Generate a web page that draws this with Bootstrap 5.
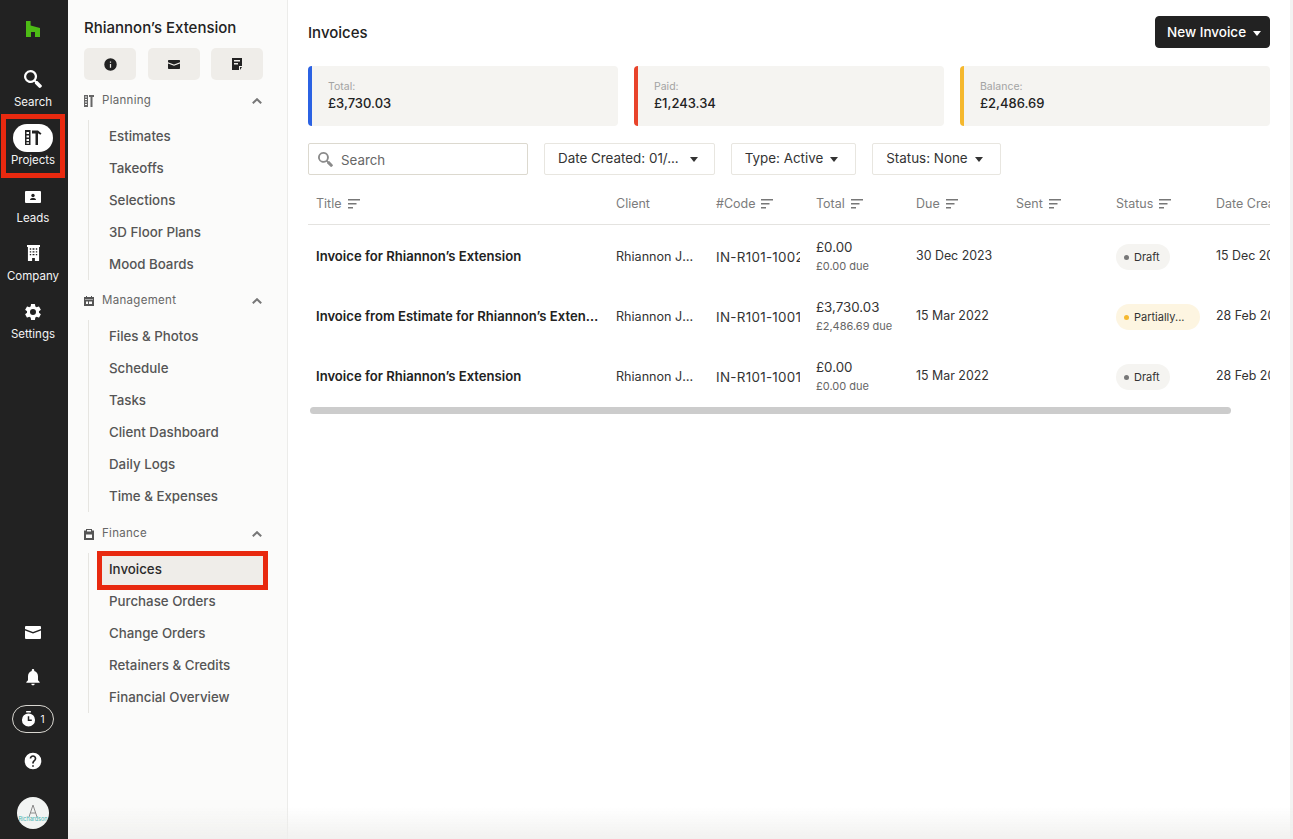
<!DOCTYPE html>
<html lang="en">
<head>
  <meta charset="UTF-8" />
  <meta name="viewport" content="width=device-width, initial-scale=1" />
  <title>Invoices</title>
  <link href="https://cdn.jsdelivr.net/npm/bootstrap@5.3.3/dist/css/bootstrap.min.css" rel="stylesheet" />
  <style>
    html, body { height: 100%; }
    body { font-family: "Inter", "Liberation Sans", sans-serif; font-size: 13.3px; color: #2b2b2b; background: #fff; overflow: hidden; }
    .app-shell { height: 839px; }

    .rail { width: 68px; background: #222; color: #fff; flex-shrink: 0; padding-right: 2px; }
    .rail-logo { height: 57px; }
    .rail-item { height: 58px; font-size: 11.5px; color: #f4f4f4; position: relative; }
    .rail-item svg { fill: #fff; }
    .rail-gap { margin-top: 7px; }
    .rail-pill { width: 40px; height: 28px; border-radius: 14px; background: #fff; }
    .rail-foot { height: 42px; }
    .rail-foot-first { height: 47px; }
    .rail-timer { width: 42px; height: 28px; border: 1px solid #d8d6d0; border-radius: 14px; font-size: 10px; }
    .rail-avatar-wrap { padding: 15px 0 10px; }
    .rail-avatar { width: 32px; height: 32px; border-radius: 50%; background: #f2f4f3; font-size: 5.5px; color: #45b3b0; line-height: 1; overflow: hidden; white-space: nowrap; }
    .mark-box { position: absolute; border: 5px solid #e8290f; pointer-events: none; }
    .mark-projects { left: 1px; right: 1px; top: -1px; bottom: -5px; }
    .mark-invoices { left: -5px; right: -5px; top: -2px; bottom: -5px; }

    .side-panel { width: 220px; background: #fbfbfa; border-right: 1px solid #ececea; padding: 0 24px 0 16px; flex-shrink: 0; }
    .side-title { font-size: 15px; font-weight: 500; color: #222; height: 48px; padding-top: 18px; line-height: 20px; }
    .side-btn { width: 52px; height: 32px; background: #efede9; border: 0; border-radius: 5px; padding: 0; }
    .side-head { height: 40px; padding: 2px 1px 0 0; font-size: 11.5px; color: #666; letter-spacing: .3px; }
    .side-head-last { margin-top: 1px; }
    .side-list { margin-left: 4px; border-left: 1px solid #e6e5e1; padding-left: 13px; }
    .side-link { height: 32px; padding: 2px 0 0 7px; font-size: 13.3px; font-weight: 500; color: #555; position: relative; text-decoration: none; }
    .side-link.is-current { background: #efede9; color: #2b2b2b; }

    .main-pane { min-width: 0; padding: 0 20px; border-right: 3px solid #f3f3f2; }
    .page-top { height: 66px; padding-top: 16px; }
    .page-heading { font-size: 15px; font-weight: 500; color: #222; margin: 0; }
    .btn-invoice { width: 115px; height: 32px; padding: 0 0 0 11px; font-size: 13.5px; font-weight: 500; background: #222; border-color: #222; border-radius: 4px; text-align: left; }
    .sum-box { height: 60px; background: #f5f4f1; border-radius: 4px; border-left: 4px solid; padding-left: 16px; }
    .sum-label { font-size: 10.5px; color: #a3a3a3; line-height: 14px; }
    .sum-value { font-size: 13px; font-weight: 500; color: #222; line-height: 18px; }
    .filter-row { margin-top: 17px; }
    .search-box { width: 220px; height: 32px; border: 1px solid #dcd9cf; border-radius: 2px; padding: 3px 0 0 9px; }
    .search-box svg { margin-top: -3px; }
    .search-box input { border: 0; outline: 0; padding: 0; width: 160px; font-size: 13.3px; background: transparent; }
    .search-box input::placeholder { color: #666; opacity: 1; }
    .btn-filter { height: 32px; padding: 0 17px 2px 13px; font-size: 13.4px; color: #333; background: #fff; border: 1px solid #e8e6e0; border-radius: 2px; }
    .btn-filter.dropdown-toggle::after, .btn-invoice.dropdown-toggle::after { margin-left: 7px; vertical-align: 1px; border-top-width: 5px; border-left-width: 4.5px; border-right-width: 4.5px; }
    .btn-filter.filter-date.dropdown-toggle::after { margin-left: 11px; }
    .btn-filter.filter-date { padding-right: 16px; }
    .table-clip { overflow: hidden; margin-top: 10px; }
    .inv-table { table-layout: fixed; width: 1062px; margin: 0; }
    .inv-table th { height: 39px; font-size: 12.5px; font-weight: 400; color: #7c7c7c; padding: 0 8px; border-bottom: 1px solid #e4e3e0; vertical-align: middle; white-space: nowrap; }
    .inv-table td { height: 60px; font-size: 12.4px; color: #333; padding: 4px 8px 0; border: 0; vertical-align: middle; white-space: nowrap; overflow: hidden; }
    .inv-table td.inv-title { font-size: 13.1px; font-weight: 600; color: #222; text-overflow: ellipsis; padding-top: 5px; }
    .inv-table td.inv-client { text-overflow: ellipsis; font-size: 12.6px; padding-top: 6px; }
    .inv-table td.inv-code { padding-top: 6px; }
    .code-clip { overflow: hidden; font-size: 13.4px; letter-spacing: .3px; }
    .inv-total { font-size: 13.3px; line-height: 20px; }
    .inv-due { font-size: 11px; color: #666; line-height: 18px; }
    .sort-mark { margin-left: 6px; vertical-align: -1px; }
    .status-pill { height: 26px; padding: 0 10px 0 8px; font-size: 11px; font-weight: 400; color: #333; border-radius: 13px; background: #f5f4f1; margin-top: 2px; }
    .status-pill.is-partial { background: #fdf5e1; width: 84px; }
    .status-dot { width: 5px; height: 5px; border-radius: 50%; background: #777; margin-right: 5px; }
    .is-partial .status-dot { background: #f5b82e; }
    .fake-scroll { width: 921px; height: 7px; background: #ccc; border-radius: 4px; margin: 3px 0 0 2px; }
    .bottom-fade { position: fixed; left: 68px; right: 0; bottom: 0; height: 32px; background: linear-gradient(rgba(238,238,236,0), rgba(238,238,236,.8)); pointer-events: none; }
  </style>
</head>
<body>
  <div class="app-shell d-flex">

    <nav class="rail d-flex flex-column align-items-center">
      <div class="rail-logo d-flex align-items-center justify-content-center w-100">
        <svg width="14" height="16" viewBox="0 0 14 16"><path fill="#4dbc15" d="M0 0h4.600v4.500L14 7v9H9v-5H5v5H0z"/></svg>
      </div>
      <div class="rail-item d-flex flex-column align-items-center justify-content-end w-100 pb-1">
        <svg width="18" height="18" viewBox="0 0 18 18"><path fill-rule="evenodd" d="M6.500 0a6.500 6.500 0 0 1 5.200 10.400l.7.700 1-.2 4 4a1.400 1.400 0 0 1 0 2l-.6.600a1.400 1.400 0 0 1-2 0l-4-4 .2-1-.7-.7A6.500 6.500 0 1 1 6.500 0zm0 2.200a4.300 4.300 0 1 0 0 8.600 4.300 4.300 0 0 0 0-8.600z"/></svg>
        <span style="margin-top:6px">Search</span>
      </div>
      <div class="rail-item d-flex flex-column align-items-center justify-content-end w-100 pb-1">
        <span class="rail-pill d-flex align-items-center justify-content-center">
          <svg width="17" height="15" viewBox="0 0 17 15"><path fill="#222" fill-rule="evenodd" d="M0 0h5.500v15H0zm1.500 2v2h2.500V2zm0 3.500v2h2.500v-2zm0 3.500v2h2.500V9zm0 3.200v1.600h2.500v-1.600zM7 .5h6l3.500 3-1.200 1.300L13.500 3.500h-.5V15h-2.500V3.500H7z"/></svg>
        </span>
        <span>Projects</span>
        <span class="mark-box mark-projects"></span>
      </div>
      <div class="rail-item d-flex flex-column align-items-center justify-content-end w-100 pb-1">
        <svg width="16" height="12" viewBox="0 0 16 12"><path d="M1 0h14a1 1 0 0 1 1 1v10a1 1 0 0 1-1 1H1a1 1 0 0 1-1-1V1a1 1 0 0 1 1-1z"/><circle cx="8" cy="4.500" r="1.700" fill="#222"/><path fill="#222" d="M5 9c0-1.500 1.500-2 3-2s3 .5 3 2z"/></svg>
        <span class="rail-gap">Leads</span>
      </div>
      <div class="rail-item d-flex flex-column align-items-center justify-content-end w-100 pb-1">
        <svg width="13" height="16" viewBox="0 0 14 17"><path d="M0 0h14v2h-1v15H8.500v-3h-3v3H1V2H0z"/><path fill="#222" d="M3 3.500h1.500V5H3zm3 0h2V5H6zm3.500 0H11V5H9.500zM3 6.500h1.500V8H3zm3 0h2V8H6zm3.500 0H11V8H9.500zM3 9.500h1.500V11H3zm3 0h2V11H6zm3.500 0H11V11H9.500z"/></svg>
        <span class="rail-gap">Company</span>
      </div>
      <div class="rail-item d-flex flex-column align-items-center justify-content-end w-100 pb-1">
        <svg width="20" height="20" viewBox="0 0 24 24"><path d="M19.140 12.940c.04-.3.06-.61.06-.94 0-.32-.02-.64-.07-.94l2.030-1.580a.49.49 0 0 0 .12-.61l-1.920-3.320a.488.488 0 0 0-.59-.22l-2.390.96c-.5-.38-1.030-.7-1.620-.94l-.36-2.540a.484.484 0 0 0-.48-.41h-3.840c-.24 0-.43.17-.47.41l-.36 2.540c-.59.24-1.130.57-1.620.94l-2.390-.96c-.22-.08-.47 0-.59.22L2.740 8.870c-.12.21-.08.47.12.61l2.030 1.580c-.05.3-.09.63-.09.94s.02.64.07.94l-2.030 1.580a.49.49 0 0 0-.12.61l1.920 3.320c.12.22.37.29.59.22l2.390-.96c.5.38 1.030.7 1.620.94l.36 2.540c.05.24.24.41.48.41h3.840c.24 0 .44-.17.47-.41l.36-2.540c.59-.24 1.130-.56 1.620-.94l2.390.96c.22.08.47 0 .59-.22l1.920-3.320c.12-.22.07-.47-.12-.61l-2.010-1.580zM12 15.600A3.610 3.610 0 0 1 8.400 12 3.610 3.610 0 0 1 12 8.400a3.610 3.610 0 0 1 3.600 3.600 3.610 3.610 0 0 1-3.600 3.600z"/></svg>
        <span class="mt-1">Settings</span>
      </div>

      <div class="mt-auto d-flex flex-column align-items-center w-100">
        <div class="rail-foot-first d-flex align-items-center justify-content-center w-100">
          <svg width="16" height="13" viewBox="0 0 16 13"><path fill="#fff" d="M1 0h14a1 1 0 0 1 1 1v2L8 6 0 3V1a1 1 0 0 1 1-1zM0 4.500l8 3 8-3V12a1 1 0 0 1-1 1H1a1 1 0 0 1-1-1z"/></svg>
        </div>
        <div class="rail-foot d-flex align-items-center justify-content-center w-100">
          <svg width="20" height="20" viewBox="0 0 24 24"><path fill="#fff" d="M12 22c1.100 0 2-.9 2-2h-4c0 1.100.9 2 2 2zm6-6v-5c0-3.070-1.630-5.640-4.500-6.320V4c0-.83-.67-1.500-1.500-1.500s-1.500.67-1.500 1.500v.68C7.640 5.360 6 7.920 6 11v5l-2 2v1h16v-1l-2-2z"/></svg>
        </div>
        <div class="rail-foot d-flex align-items-center justify-content-center w-100">
          <div class="rail-timer d-flex align-items-center justify-content-center gap-1">
            <svg width="15" height="16" viewBox="0 0 16 17"><path fill="#fff" d="M5.500 0h5v1.500h-5zM8 2.500a7 7 0 1 1 0 14 7 7 0 0 1 0-14z"/><path fill="none" stroke="#222" stroke-width="1.600" d="M8 5.500v4.200h3.500"/></svg>
            <span>1</span>
          </div>
        </div>
        <div class="rail-foot d-flex align-items-center justify-content-center w-100">
          <svg width="20" height="20" viewBox="0 0 24 24"><path fill="#fff" d="M12 2a10 10 0 1 0 0 20 10 10 0 0 0 0-20zm1 17h-2v-2h2v2zm2.070-7.750l-.9.920C13.450 12.900 13 13.500 13 15h-2v-.5c0-1.100.45-2.100 1.170-2.830l1.240-1.260c.37-.36.59-.86.59-1.410 0-1.100-.9-2-2-2s-2 .9-2 2H8c0-2.210 1.790-4 4-4s4 1.790 4 4c0 .88-.36 1.680-.93 2.250z"/></svg>
        </div>
        <div class="rail-avatar-wrap d-flex justify-content-center">
          <div class="rail-avatar d-flex flex-column align-items-center justify-content-center">
            <svg width="10" height="13" viewBox="0 0 10 13"><path fill="none" stroke="#8a8a8a" stroke-width="1" d="M1 13 5 1l4 12M2.500 9h5"/></svg>
            <span>Richardson</span>
          </div>
        </div>
      </div>
    </nav>

    <aside class="side-panel">
      <div class="side-title">Rhiannon’s Extension</div>
      <div class="d-flex justify-content-between">
        <button class="side-btn d-flex align-items-center justify-content-center" type="button" aria-label="Info">
          <svg width="15" height="15" viewBox="0 0 24 24"><path fill="#222" d="M12 2a10 10 0 1 0 0 20 10 10 0 0 0 0-20zm1 15h-2v-6h2v6zm0-8h-2V7h2v2z"/></svg>
        </button>
        <button class="side-btn d-flex align-items-center justify-content-center" type="button" aria-label="Mail">
          <svg width="12" height="9" viewBox="0 0 16 12"><path fill="#222" d="M1 0h14a1 1 0 0 1 1 1v2L8 6 0 3V1a1 1 0 0 1 1-1zM0 4.500l8 3 8-3V11a1 1 0 0 1-1 1H1a1 1 0 0 1-1-1z"/></svg>
        </button>
        <button class="side-btn d-flex align-items-center justify-content-center" type="button" aria-label="Notes">
          <svg width="10" height="12" viewBox="0 0 10 12"><path fill="#222" fill-rule="evenodd" d="M0 0h10v8H7v4H0zm2 2v1.500h6V2zm0 3v1.500h4V5zM8 9h2l-2 3z"/></svg>
        </button>
      </div>

      <div class="side-head d-flex align-items-center">
        <svg class="me-2" width="10" height="12" viewBox="0 0 10 12"><path fill="#666" fill-rule="evenodd" d="M0 0h4v12H0zm1 1.500v1h2v-1zm0 2.500v1h2V4zm0 2.500v1h2v-1zm0 2.500v1h2V9zM5 0h5v2H8.500v10H6.500V2H5z"/></svg>
        <span>Planning</span>
        <svg class="ms-auto" width="10" height="6" viewBox="0 0 10 6"><path fill="none" stroke="#777" stroke-width="2" d="M.8 5.300 5 1.200l4.200 4.100"/></svg>
      </div>
      <div class="side-list">
        <a class="side-link d-flex align-items-center" href="#">Estimates</a>
        <a class="side-link d-flex align-items-center" href="#">Takeoffs</a>
        <a class="side-link d-flex align-items-center" href="#">Selections</a>
        <a class="side-link d-flex align-items-center" href="#">3D Floor Plans</a>
        <a class="side-link d-flex align-items-center" href="#">Mood Boards</a>
      </div>

      <div class="side-head d-flex align-items-center">
        <svg class="me-2" width="10" height="10" viewBox="0 0 10 10"><path fill="#555" fill-rule="evenodd" d="M0 1h2V0h1v1h4V0h1v1h2v9H0zm1 2.500V4h8v-.5zM2 5.500V8h2V5.500zm3 0V8h3V5.500z"/></svg>
        <span>Management</span>
        <svg class="ms-auto" width="10" height="6" viewBox="0 0 10 6"><path fill="none" stroke="#777" stroke-width="2" d="M.8 5.300 5 1.200l4.200 4.100"/></svg>
      </div>
      <div class="side-list">
        <a class="side-link d-flex align-items-center" href="#">Files &amp; Photos</a>
        <a class="side-link d-flex align-items-center" href="#">Schedule</a>
        <a class="side-link d-flex align-items-center" href="#">Tasks</a>
        <a class="side-link d-flex align-items-center" href="#">Client Dashboard</a>
        <a class="side-link d-flex align-items-center" href="#">Daily Logs</a>
        <a class="side-link d-flex align-items-center" href="#">Time &amp; Expenses</a>
      </div>

      <div class="side-head side-head-last d-flex align-items-center">
        <svg class="me-2" width="10" height="11" viewBox="0 0 10 11"><path fill="#555" fill-rule="evenodd" d="M2 0h6v1.500h2V11H0V1.500h2zm1 1v1.500h4V1zM2 5.500V9h6V5.500z"/></svg>
        <span>Finance</span>
        <svg class="ms-auto" width="10" height="6" viewBox="0 0 10 6"><path fill="none" stroke="#777" stroke-width="2" d="M.8 5.300 5 1.200l4.200 4.100"/></svg>
      </div>
      <div class="side-list">
        <a class="side-link is-current d-flex align-items-center" href="#">Invoices<span class="mark-box mark-invoices"></span></a>
        <a class="side-link d-flex align-items-center" href="#">Purchase Orders</a>
        <a class="side-link d-flex align-items-center" href="#">Change Orders</a>
        <a class="side-link d-flex align-items-center" href="#">Retainers &amp; Credits</a>
        <a class="side-link d-flex align-items-center" href="#">Financial Overview</a>
      </div>
    </aside>

    <main class="main-pane flex-grow-1">
      <div class="page-top d-flex justify-content-between align-items-start">
        <h1 class="page-heading mt-2">Invoices</h1>
        <button class="btn btn-dark btn-invoice dropdown-toggle" type="button">New Invoice</button>
      </div>

      <div class="row g-3">
        <div class="col-4"><div class="sum-box d-flex flex-column justify-content-center" style="border-left-color:#2b62e3"><div class="sum-label">Total:</div><div class="sum-value">£3,730.03</div></div></div>
        <div class="col-4"><div class="sum-box d-flex flex-column justify-content-center" style="border-left-color:#e8432a"><div class="sum-label">Paid:</div><div class="sum-value">£1,243.34</div></div></div>
        <div class="col-4"><div class="sum-box d-flex flex-column justify-content-center" style="border-left-color:#f5b82e"><div class="sum-label">Balance:</div><div class="sum-value">£2,486.69</div></div></div>
      </div>

      <div class="filter-row d-flex gap-3">
        <div class="search-box d-flex align-items-center gap-2">
          <svg width="15" height="15" viewBox="0 0 18 18"><path fill="#8a8a8a" fill-rule="evenodd" d="M6.500 0a6.500 6.500 0 0 1 5.200 10.400l.7.700 1-.2 4 4a1.400 1.400 0 0 1 0 2l-.6.600a1.400 1.400 0 0 1-2 0l-4-4 .2-1-.7-.7A6.500 6.500 0 1 1 6.500 0zm0 2.200a4.300 4.300 0 1 0 0 8.600 4.300 4.300 0 0 0 0-8.600z"/></svg>
          <input type="text" placeholder="Search" />
        </div>
        <button class="btn btn-filter filter-date dropdown-toggle" type="button">Date Created: 01/...</button>
        <button class="btn btn-filter dropdown-toggle" type="button">Type: Active</button>
        <button class="btn btn-filter dropdown-toggle" type="button">Status: None</button>
      </div>

      <div class="table-clip">
        <table class="table inv-table">
          <colgroup><col style="width:300px"><col style="width:100px"><col style="width:100px"><col style="width:100px"><col style="width:100px"><col style="width:100px"><col style="width:100px"><col style="width:162px"></colgroup>
          <thead>
            <tr>
              <th>Title<svg class="sort-mark" width="12" height="10" viewBox="0 0 12 10"><path fill="#777" d="M0 0h12v1.500H0zM0 4h8.500v1.500H0zM0 8h5v1.500H0z"/></svg></th>
              <th>Client</th>
              <th>#Code<svg class="sort-mark" width="12" height="10" viewBox="0 0 12 10"><path fill="#777" d="M0 0h12v1.500H0zM0 4h8.500v1.500H0zM0 8h5v1.500H0z"/></svg></th>
              <th>Total<svg class="sort-mark" width="12" height="10" viewBox="0 0 12 10"><path fill="#777" d="M0 0h12v1.500H0zM0 4h8.500v1.500H0zM0 8h5v1.500H0z"/></svg></th>
              <th>Due<svg class="sort-mark" width="12" height="10" viewBox="0 0 12 10"><path fill="#777" d="M0 0h12v1.500H0zM0 4h8.500v1.500H0zM0 8h5v1.500H0z"/></svg></th>
              <th>Sent<svg class="sort-mark" width="12" height="10" viewBox="0 0 12 10"><path fill="#777" d="M0 0h12v1.500H0zM0 4h8.500v1.500H0zM0 8h5v1.500H0z"/></svg></th>
              <th>Status<svg class="sort-mark" width="12" height="10" viewBox="0 0 12 10"><path fill="#777" d="M0 0h12v1.500H0zM0 4h8.500v1.500H0zM0 8h5v1.500H0z"/></svg></th>
              <th>Date Created</th>
            </tr>
          </thead>
          <tbody>
            <tr>
              <td class="inv-title">Invoice for Rhiannon’s Extension</td>
              <td class="inv-client">Rhiannon Jones</td>
              <td class="inv-code"><div class="code-clip">IN-R101-1002</div></td>
              <td><div class="inv-total">£0.00</div><div class="inv-due">£0.00 due</div></td>
              <td>30 Dec 2023</td>
              <td></td>
              <td><span class="badge status-pill d-inline-flex align-items-center"><span class="status-dot"></span>Draft</span></td>
              <td>15 Dec 2021</td>
            </tr>
            <tr>
              <td class="inv-title">Invoice from Estimate for Rhiannon’s Extension</td>
              <td class="inv-client">Rhiannon Jones</td>
              <td class="inv-code"><div class="code-clip">IN-R101-1001</div></td>
              <td><div class="inv-total">£3,730.03</div><div class="inv-due">£2,486.69 due</div></td>
              <td>15 Mar 2022</td>
              <td></td>
              <td><span class="badge status-pill is-partial d-inline-flex align-items-center"><span class="status-dot"></span>Partially...</span></td>
              <td>28 Feb 2022</td>
            </tr>
            <tr>
              <td class="inv-title">Invoice for Rhiannon’s Extension</td>
              <td class="inv-client">Rhiannon Jones</td>
              <td class="inv-code"><div class="code-clip">IN-R101-1001</div></td>
              <td><div class="inv-total">£0.00</div><div class="inv-due">£0.00 due</div></td>
              <td>15 Mar 2022</td>
              <td></td>
              <td><span class="badge status-pill d-inline-flex align-items-center"><span class="status-dot"></span>Draft</span></td>
              <td>28 Feb 2022</td>
            </tr>
          </tbody>
        </table>
      </div>
      <div class="fake-scroll"></div>
    </main>
  </div>
  <div class="bottom-fade"></div>
  <script src="https://cdn.jsdelivr.net/npm/bootstrap@5.3.3/dist/js/bootstrap.bundle.min.js"></script>
</body>
</html>
